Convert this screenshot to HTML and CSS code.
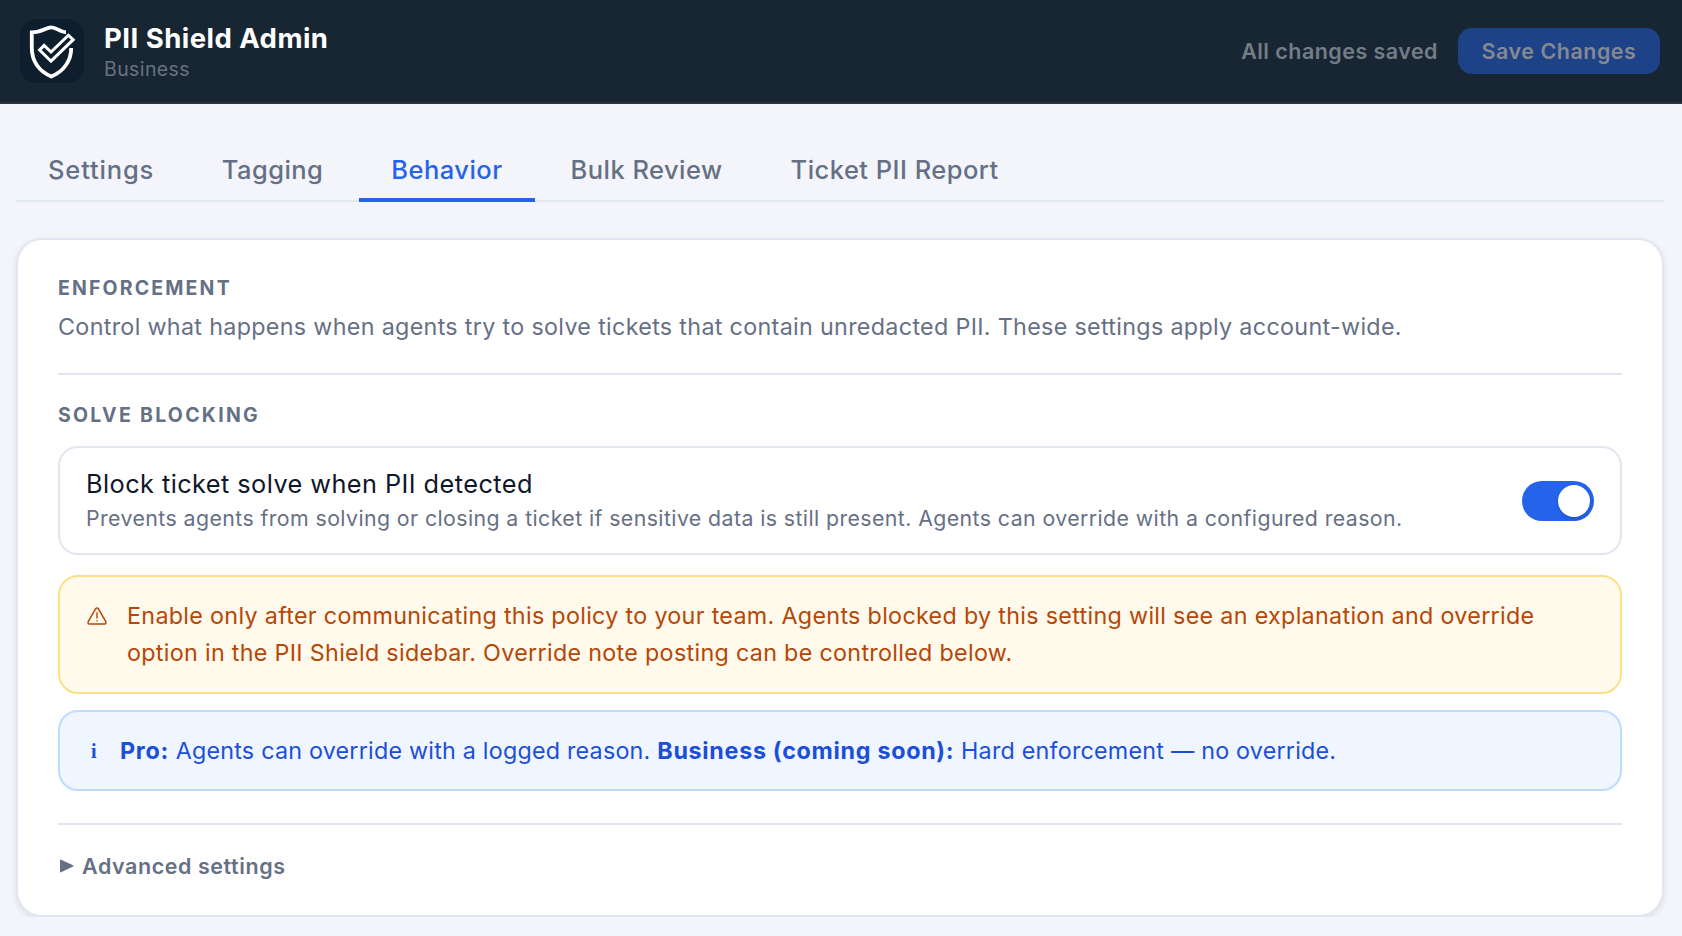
FILE: index.html
```html
<!DOCTYPE html>
<html lang="en">
<head>
<meta charset="utf-8">
<title>PII Shield Admin</title>
<link rel="stylesheet" href="styles.css">
</head>
<body>
<header class="topbar">
  <svg class="logo" viewBox="0 0 64 64" fill="none" stroke="#fff">
    <rect width="64" height="64" rx="16" fill="#0f1e2c" stroke="none"/>
    <path stroke-width="3.8" d="M46 13.4C40 13.4 36.5 8.3 31.3 8.3C26 8.3 22 13.4 11.8 13.4V29C11.8 42 19 52.5 31.3 57.4C43.6 52.5 51.2 42 51.2 29"/>
    <path stroke-width="3" d="M31 33L48.4 16.2L53.2 20.7L31 42.2L19.6 31L24.1 26.4Z"/>
  </svg>
  <div class="brand">
    <div class="brand-name">PII Shield Admin</div>
    <div class="brand-plan">Business</div>
  </div>
  <span class="status">All changes saved</span>
  <button class="save" disabled>Save Changes</button>
</header>
<main class="page">
  <nav class="tabs">
    <a class="tab tab-settings">Settings</a>
    <a class="tab">Tagging</a>
    <a class="tab active">Behavior</a>
    <a class="tab">Bulk Review</a>
    <a class="tab">Ticket PII Report</a>
  </nav>
  <section class="card">
    <h2 class="heading">ENFORCEMENT</h2>
    <p class="desc">Control what happens when agents try to solve tickets that contain unredacted PII. These settings apply account-wide.</p>
    <hr class="rule">
    <h2 class="heading heading-blocking">SOLVE BLOCKING</h2>
    <div class="setting">
      <div class="setting-text">
        <div class="setting-title">Block ticket solve when PII detected</div>
        <div class="setting-sub">Prevents agents from solving or closing a ticket if sensitive data is still present. Agents can override with a configured reason.</div>
      </div>
      <span class="switch"><span class="knob"></span></span>
    </div>
    <div class="alert warning">
      <svg class="warn-icon" viewBox="0 0 20 18" fill="none" stroke="currentColor" stroke-linejoin="round" stroke-linecap="round">
        <path stroke-width="1.5" d="M8.7 1.6Q10 .2 11.3 1.6L18.8 14.6Q19.4 16.9 17.6 17H2.4Q.6 16.9 1.2 14.6Z"/>
        <path stroke-width="1.4" d="M10 5.8V11M10 13.6V13.8"/>
      </svg>
      <p class="alert-text">Enable only after communicating this policy to your team. Agents blocked by this setting will see an explanation and override<br>option in the PII Shield sidebar. Override note posting can be controlled below.</p>
    </div>
    <div class="alert info">
      <span class="info-icon">i</span>
      <p class="alert-text"><strong>Pro:</strong> Agents can override with a logged reason. <strong>Business (coming soon):</strong> Hard enforcement — no override.</p>
    </div>
    <hr class="rule rule-advanced">
    <div class="advanced">
      <svg class="arrow" viewBox="0 0 15 14"><path fill="currentColor" d="M0 .9Q0-.3 1.2.2L14 6.3Q15 7 14 7.6L1.2 13.8Q0 14.3 0 13Z"/></svg>
      <span>Advanced settings</span>
    </div>
  </section>
</main>
</body>
</html>
```

FILE: styles.css
```css
* { box-sizing: border-box; }
body { margin: 0; background: #f4f5fb; color: #667085; font-family: Inter, "Liberation Sans", sans-serif; }
h2, p { margin: 0; }

.topbar { display: flex; align-items: center; height: 104px; padding: 0 22px 0 20px; background: #182633; border-bottom: 2px solid #283446; }
.logo { width: 64px; height: 64px; }
.brand { display: flex; flex-direction: column; margin-left: 20px; }
.brand-name { padding-bottom: 3px; font-size: 27.5px; line-height: 32px; font-weight: 700; letter-spacing: .47px; color: #fff; }
.brand-plan { font-size: 19.5px; line-height: 24px; letter-spacing: .4px; color: #68727d; }
.status { margin-left: auto; margin-right: 20px; font-size: 21.5px; line-height: 30px; font-weight: 560; letter-spacing: .46px; color: #747d86; }
.save { width: 202px; height: 46px; padding: 0; border: 0; border-radius: 14px; background: #1e4287; color: #828994; font: 560 21.5px/30px Inter, "Liberation Sans", sans-serif; letter-spacing: .5px; }

.page { padding: 32px 18px 0 16px; }
.tabs { display: flex; gap: 4px; height: 66px; border-bottom: 2px solid #e2e8f0; }
.tab { height: 66px; padding: 18px 32px 0 32px; border-bottom: 4px solid transparent; font-size: 25.5px; line-height: 32px; font-weight: 550; letter-spacing: .46px; }
.tab-settings { letter-spacing: .85px; padding-right: 31.5px; }
.tab.active { color: #2563eb; border-color: #2563eb; }

.card { margin-top: 36px; height: 679px; padding: 36px 40px 0; background: #fff; border: 2px solid #e2e6f0; border-radius: 26px; box-shadow: 0 2px 6px rgba(16, 24, 40, .1); }
.heading { font-size: 19.5px; line-height: 24px; font-weight: 670; letter-spacing: 2.15px; }
.heading-blocking { letter-spacing: 2.27px; }
.desc { padding-top: 1px; margin-top: 8px; font-size: 23.3px; line-height: 36px; letter-spacing: .32px; white-space: nowrap; }
.rule { height: 2px; margin: 28px 0 28px; border: 0; background: #e2e6f0; }
.rule-advanced { margin: 32px 0 26px; }

.setting { display: flex; align-items: center; justify-content: space-between; height: 109px; margin-top: 19px; padding: 0 26px; border: 2px solid #e2e6f0; border-radius: 20px; white-space: nowrap; }
.setting-title { font-size: 25.3px; line-height: 34px; letter-spacing: .44px; color: #0f172a; }
.setting-sub { font-size: 21.3px; line-height: 34px; letter-spacing: .416px; }
.switch { display: flex; justify-content: flex-end; width: 72px; height: 40px; padding: 4px; border-radius: 20px; background: #2563eb; }
.knob { width: 32px; height: 32px; border-radius: 50%; background: #fff; box-shadow: 0 2px 4px rgba(0, 0, 0, .15); }

.alert { display: flex; align-items: flex-start; padding: 20px 26px; border: 2px solid; border-radius: 20px; font-size: 23.3px; line-height: 37px; letter-spacing: .31px; white-space: nowrap; }
.warning { height: 119px; margin-top: 20px; background: #fffaeb; border-color: #fedf89; color: #b54708; }
.warn-icon { width: 20px; height: 18px; margin: 10px 20px 0 1px; }
.info { height: 81px; margin-top: 16px; background: #eff6ff; border-color: #bfdbfe; color: #1d4ed8; letter-spacing: .22px; }
.info strong { font-weight: 700; letter-spacing: .7px; }
.info-icon { width: 34px; padding-left: 5px; font: 700 20px/39px "Liberation Serif", serif; letter-spacing: 0; }

.advanced { display: flex; align-items: center; gap: 8px; padding-left: 2px; font-size: 21.5px; line-height: 30px; font-weight: 560; letter-spacing: .56px; }
.arrow { width: 14px; height: 14px; }
```
